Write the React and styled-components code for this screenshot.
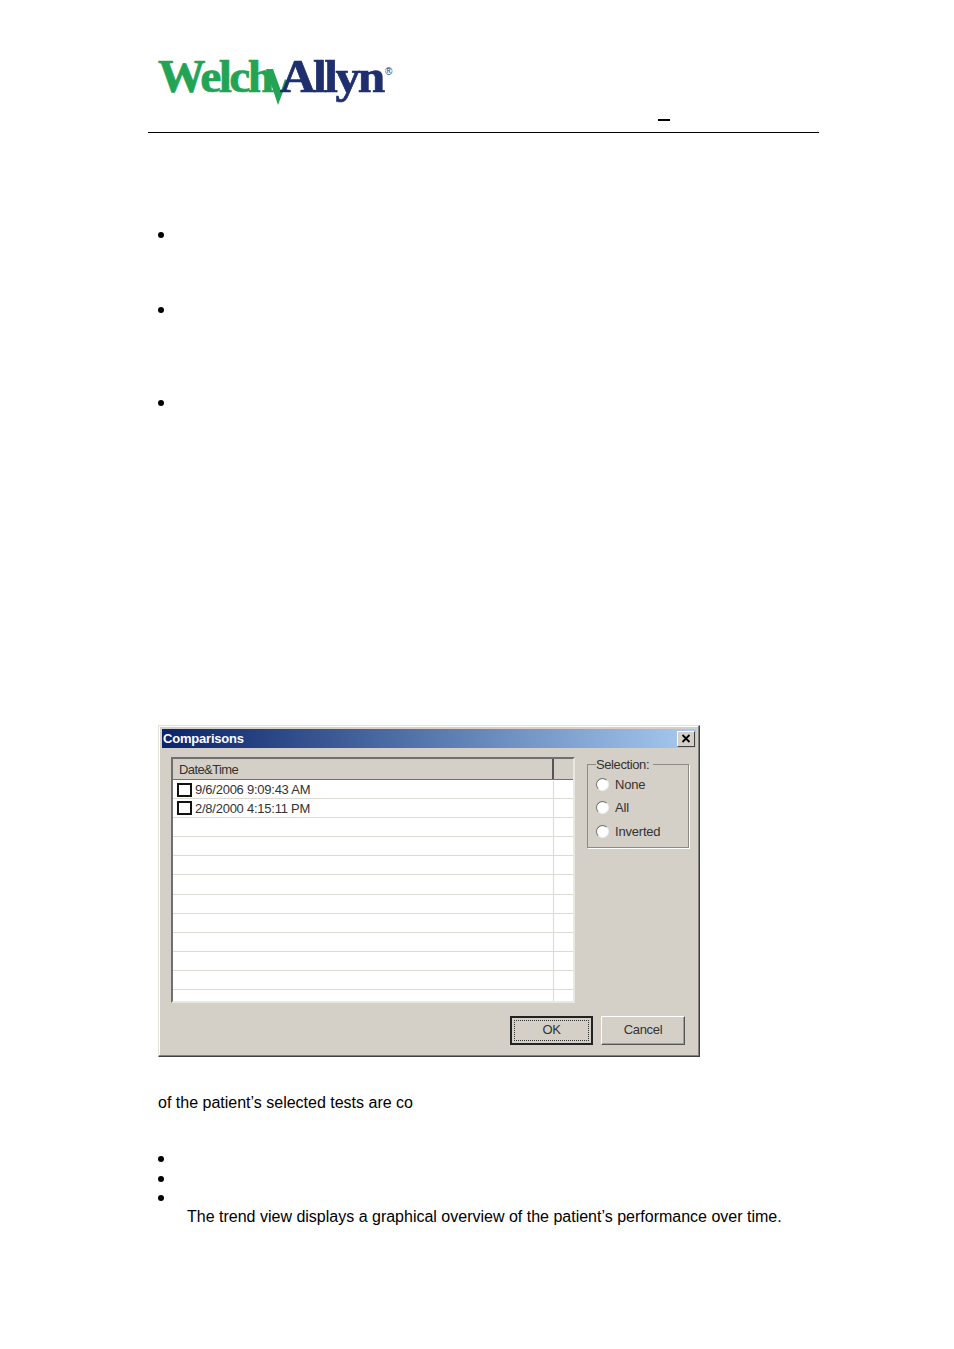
import styled, { createGlobalStyle } from "styled-components";

const GlobalStyle = createGlobalStyle`
  html, body {
    margin: 0;
    padding: 0;
    background: #fff;
  }
  body {
    font-family: "Liberation Sans", Arial, sans-serif;
    color: #000;
  }
`;

const Page = styled.div`
  width: 954px;
  height: 1349px;
  padding: 0 135px 0 148px;
  box-sizing: border-box;
  overflow: hidden;
`;

const Header = styled.header`
  height: 133px;
  box-sizing: border-box;
  border-bottom: 1px solid #000;
  display: flex;
  align-items: flex-start;
  padding: 49px 0 0 9px;
`;

const Logo = styled.div`
  position: relative;
  width: 236px;
  height: 60px;
  font-family: "Liberation Serif", "Times New Roman", serif;
  font-weight: 700;
  font-size: 47px;
  line-height: 54px;
`;

const LogoWord = styled.span`
  position: absolute;
  top: 0;
  left: ${(p) => p.$left}px;
  color: ${(p) => p.$color};
  letter-spacing: ${(p) => p.$spacing}px;
  transform: scaleX(${(p) => p.$scale});
  transform-origin: left center;
  -webkit-text-stroke: 0.7px ${(p) => p.$color};
`;

const LogoMark = styled.span`
  position: absolute;
  top: 17px;
  left: 228px;
  font-family: "Liberation Sans", sans-serif;
  font-size: 10px;
  line-height: 12px;
  font-weight: 400;
  color: #1f2f6e;
`;

const PulseSvg = styled.svg`
  position: absolute;
  top: 6px;
  left: 100px;
`;

const HeaderDash = styled.div`
  width: 12px;
  height: 2px;
  background: #000;
  margin: 70px 0 0 265px;
`;

const Main = styled.main`
  padding-left: 10px;
`;

const BulletDot = styled.div`
  width: 6px;
  height: 6px;
  border-radius: 50%;
  background: #000;
  margin-top: ${(p) => p.$top}px;
`;

const Dialog = styled.section`
  width: 542px;
  height: 332px;
  margin-top: 319px;
  box-sizing: border-box;
  background: #d4d0c8;
  border: 1px solid;
  border-color: #e4e1da #404040 #404040 #e4e1da;
  box-shadow: inset -1px -1px 0 #808080, inset 1px 1px 0 #fff;
  padding: 3px;
  font-family: "Liberation Sans", Arial, sans-serif;
  font-size: 12px;
  color: #333;
  display: flex;
  flex-direction: column;
`;

const TitleBar = styled.div`
  height: 19px;
  flex: none;
  background: linear-gradient(90deg, #0a246a, #a6caf0);
  display: flex;
  align-items: center;
  justify-content: space-between;
  padding: 0 1px 0 1px;
`;

const TitleText = styled.span`
  color: #fff;
  font-weight: 700;
  font-size: 13px;
  letter-spacing: -0.2px;
`;

const CloseButton = styled.div`
  width: 18px;
  height: 16px;
  box-sizing: border-box;
  background: #d4d0c8;
  border: 1px solid;
  border-color: #fff #404040 #404040 #fff;
  display: flex;
  align-items: center;
  justify-content: center;
`;

const DialogBody = styled.div`
  flex: 1;
  position: relative;
  display: flex;
  align-items: flex-start;
  padding: 9px 0 0 9px;
  gap: 12px;
`;

const ListBox = styled.div`
  width: 404px;
  height: 246px;
  flex: none;
  box-sizing: border-box;
  background: #fff;
  border: 2px solid;
  border-color: #6f6f6f #e9e7e2 #e9e7e2 #6f6f6f;
  overflow: hidden;
`;

const ListHeader = styled.div`
  display: flex;
  height: 21px;
  background: #d4d0c8;
  border-bottom: 1px solid #6f6f6f;
  box-sizing: border-box;
`;

const HeaderCell = styled.div`
  width: ${(p) => p.$width}px;
  flex: ${(p) => (p.$grow ? 1 : "none")};
  box-sizing: border-box;
  padding: 3px 0 0 6px;
  font-size: 13px;
  line-height: 15px;
  border-right: ${(p) => (p.$grow ? "none" : "2px solid #555")};
  letter-spacing: -0.6px;
`;

const Row = styled.div`
  display: flex;
  height: 19.1px;
  box-sizing: border-box;
  border-bottom: 1px solid #dcdad3;
  padding-top: ${(p) => (p.$first ? 1 : 0)}px;
`;

const RowCell = styled.div`
  width: 381px;
  flex: none;
  box-sizing: border-box;
  border-right: 1px solid #dcdad3;
  display: flex;
  align-items: center;
  gap: 4px;
  padding-left: 4px;
  font-size: 13px;
  letter-spacing: -0.25px;
`;

const CheckBox = styled.span`
  width: 15px;
  height: 14px;
  box-sizing: border-box;
  border: 2px solid #111;
  background: #fff;
  flex: none;
  margin-right: -1px;
`;

const SelectionGroup = styled.fieldset`
  width: 102px;
  height: 91px;
  flex: none;
  box-sizing: border-box;
  margin: 0;
  padding: 0 0 0 8px;
  border: 1px solid #8d8b86;
  box-shadow: 1px 1px 0 #fff;
  display: flex;
  flex-direction: column;
  gap: 7px;
`;

const GroupLegend = styled.legend`
  padding: 0 4px 0 0;
  margin-left: 0;
  margin-bottom: 4px;
  font-size: 13px;
  line-height: 15px;
  letter-spacing: -0.4px;
`;

const RadioRow = styled.label`
  display: flex;
  align-items: center;
  gap: 6px;
  height: 16.5px;
  font-size: 13px;
  letter-spacing: -0.2px;
`;

const Radio = styled.span`
  width: 13px;
  height: 13px;
  flex: none;
  box-sizing: border-box;
  border-radius: 50%;
  background: #fff;
  border: 1.5px solid;
  border-color: #6f6f6f #f0eee9 #f0eee9 #6f6f6f;
`;

const ButtonRow = styled.div`
  position: absolute;
  right: 11px;
  bottom: 8px;
  display: flex;
  gap: 8px;
`;

const DialogButton = styled.div`
  width: ${(p) => (p.$primary ? 83 : 84)}px;
  height: 29px;
  box-sizing: border-box;
  background: #d4d0c8;
  display: flex;
  align-items: center;
  justify-content: center;
  padding-bottom: 2px;
  font-size: 13px;
  letter-spacing: -0.3px;
  border: ${(p) => (p.$primary ? "2px solid #222" : "1px solid")};
  border-color: ${(p) => (p.$primary ? "#222" : "#fff #555 #555 #fff")};
  outline: ${(p) => (p.$primary ? "1px dotted #333" : "none")};
  outline-offset: -5px;
  box-shadow: ${(p) => (p.$primary ? "none" : "inset -1px -1px 0 #a09e98")};
`;

const BodyText = styled.p`
  margin: ${(p) => p.$top}px 0 0 ${(p) => p.$left || 0}px;
  font-size: 16px;
  line-height: 18px;
  white-space: nowrap;
`;

const rows = ["9/6/2006 9:09:43 AM", "2/8/2000 4:15:11 PM", "", "", "", "", "", "", "", "", "", ""];

export default function App() {
  return (
    <Page>
      <GlobalStyle />
      <Header>
        <Logo>
          <LogoWord $left={1} $color="#23a455" $spacing={-2.6} $scale={1.01}>Welch</LogoWord>
          <PulseSvg width="50" height="52" viewBox="0 0 50 52">
            <path d="M9 14 L16 14 L24 36 L28 24 L30 26 L21 50 Z" fill="#23a455" />
          </PulseSvg>
          <LogoWord $left={123} $color="#1f2f6e" $spacing={-2.4} $scale={1.05}>Allyn</LogoWord>
          <LogoMark>®</LogoMark>
        </Logo>
        <HeaderDash />
      </Header>
      <Main>
        <BulletDot $top={99} />
        <BulletDot $top={69} />
        <BulletDot $top={87} />
        <Dialog>
          <TitleBar>
            <TitleText>Comparisons</TitleText>
            <CloseButton>
              <svg width="10" height="9" viewBox="0 0 10 9">
                <path d="M1.5 1 L8.5 8 M8.5 1 L1.5 8" stroke="#000" strokeWidth="1.8" />
              </svg>
            </CloseButton>
          </TitleBar>
          <DialogBody>
            <ListBox>
              <ListHeader>
                <HeaderCell $width={381}>Date&amp;Time</HeaderCell>
                <HeaderCell $grow />
              </ListHeader>
              {rows.map((text, i) => (
                <Row key={i} $first={i === 0}>
                  <RowCell>
                    {text && <CheckBox />}
                    {text}
                  </RowCell>
                </Row>
              ))}
            </ListBox>
            <SelectionGroup>
              <GroupLegend>Selection:</GroupLegend>
              <RadioRow><Radio />None</RadioRow>
              <RadioRow><Radio />All</RadioRow>
              <RadioRow><Radio />Inverted</RadioRow>
            </SelectionGroup>
            <ButtonRow>
              <DialogButton $primary>OK</DialogButton>
              <DialogButton>Cancel</DialogButton>
            </ButtonRow>
          </DialogBody>
        </Dialog>
        <BodyText $top={37}>of the patient’s selected tests are co</BodyText>
        <BulletDot $top={44} />
        <BulletDot $top={14} />
        <BulletDot $top={13} />
        <BodyText $top={7} $left={29}>The trend view displays a graphical overview of the patient’s performance over time.</BodyText>
      </Main>
    </Page>
  );
}
